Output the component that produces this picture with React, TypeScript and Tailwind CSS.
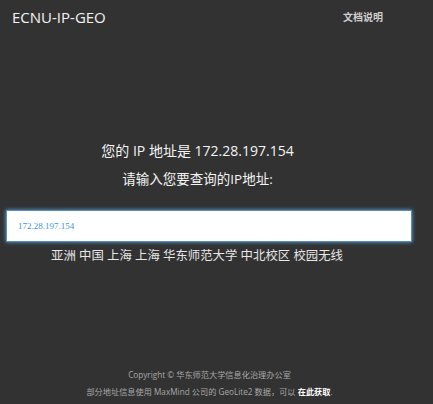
import React from 'react';

const sans = { fontFamily: '"Open Sans", "Noto Sans CJK SC", sans-serif' };

export default function App() {
  return (
    <div className="w-[433px] h-[404px] bg-[#323232] flex flex-col text-white overflow-hidden" style={sans}>
      <header className="flex items-center justify-between h-[34px] pl-[12px] pr-[50px]">
        <span className="text-[15px] text-[#f2f2f2]">ECNU-IP-GEO</span>
        <span className="text-[10px] font-bold text-[#cfcfcf]">文档说明</span>
      </header>

      <main className="flex flex-col items-center mt-[106px] pr-[38px]">
        <p className="text-[14px] leading-[22px] text-[#f4f4f4]">您的 IP 地址是 172.28.197.154</p>
        <p className="text-[13.5px] leading-[22px] text-[#f4f4f4] mt-[6px]">请输入您要查询的IP地址:</p>
      </main>

      <div className="pl-[6px] pr-[21px] mt-[20px]">
        <input
          defaultValue="172.28.197.154"
          className="w-full h-[32px] bg-white border border-[#5b8fb9] shadow-[0_0_4px_#5aa7e0] px-[11px] text-[9px] text-[#3796d6] outline-none"
          style={{ fontFamily: '"Liberation Serif", serif' }}
        />
      </div>

      <p className="text-center text-[12.4px] leading-[18px] text-[#e8e8e8] mt-[5px] pr-[39px]">
        亚洲 中国 上海 上海 华东师范大学 中北校区 校园无线
      </p>

      <footer className="mt-auto mb-[4px] flex flex-col items-center text-[8.2px] text-[#a8a8a8] pr-[14px]">
        <p className="leading-[17px]">Copyright © 华东师范大学信息化治理办公室</p>
        <p className="leading-[17px]">
          部分地址信息使用 MaxMind 公司的 GeoLite2 数据，可以 <span className="font-bold text-white">在此获取</span>.
        </p>
      </footer>
    </div>
  );
}
